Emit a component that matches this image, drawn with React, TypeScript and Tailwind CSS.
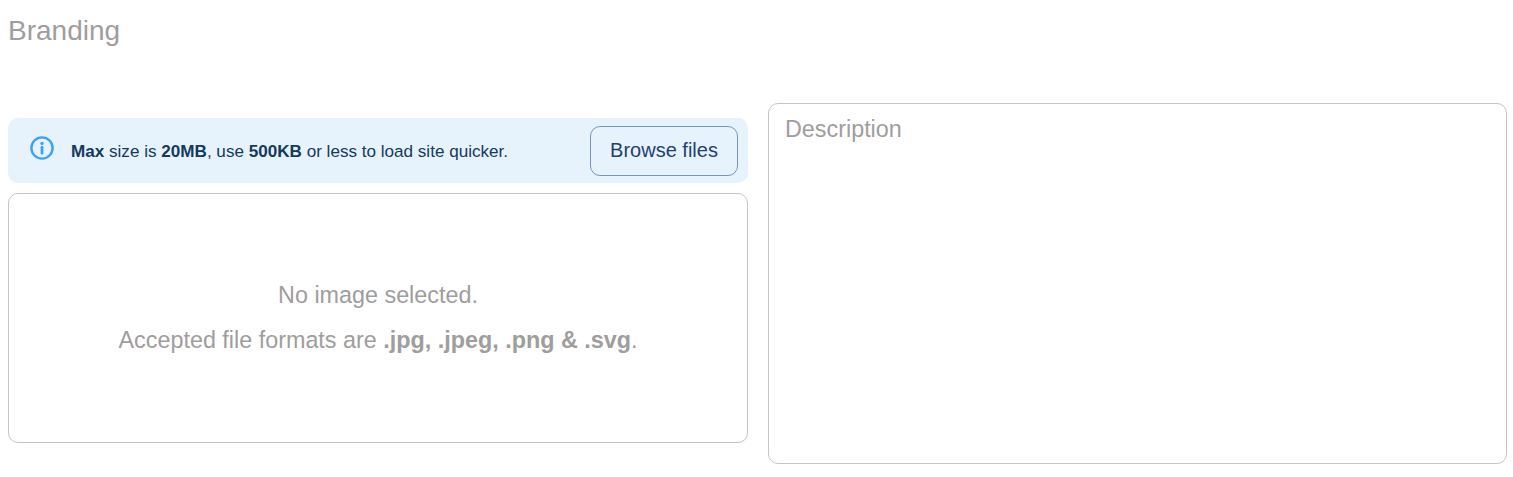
export default function App() {
  return (
    <div className="h-[477px] bg-white pl-2 pr-[6px] font-['Liberation_Sans',Arial,sans-serif]">
      <h2 className="h-[103px] pt-[15px] text-[28px] leading-[32px] text-[#a09d9d]">Branding</h2>
      <div className="flex gap-5">
        <div className="w-[740px] shrink-0 pt-[15px]">
          <div className="flex h-[65px] items-center rounded-[10px] bg-[#e6f3fd] pl-[21px] pr-[10px]">
            <svg width="26" height="26" viewBox="0 0 26 26" fill="none" className="mb-[5px] text-[#3ba1f5]">
              <circle cx="13" cy="13" r="10.6" stroke="currentColor" strokeWidth="2.4" />
              <circle cx="13" cy="8.4" r="1.7" fill="currentColor" />
              <path d="M13 12.2v6" stroke="currentColor" strokeWidth="2.8" strokeLinecap="round" />
            </svg>
            <p className="ml-4 flex-1 pt-[2px] text-[17.1px] text-[#143a5c]">
              <b>Max</b> size is <b>20MB</b>, use <b>500KB</b> or less to load site quicker.
            </p>
            <button className="h-[50px] w-[148px] rounded-[10px] border border-[#7a94bb] pb-[2px] text-[20px] text-[#24406f]">
              Browse files
            </button>
          </div>
          <div className="mt-[10px] flex h-[250px] flex-col items-center justify-center gap-[15px] rounded-[10px] border border-[#c4c4c4] pb-[2px] text-[23.35px] leading-[30px] text-[#a09d9d]">
            <p>No image selected.</p>
            <p>
              Accepted file formats are <b>.jpg, .jpeg, .png &amp; .svg</b>.
            </p>
          </div>
        </div>
        <textarea
          placeholder="Description"
          className="h-[361px] w-[739px] shrink-0 resize-none rounded-[10px] border border-[#c4c4c4] px-4 py-[10px] text-[23.35px] leading-[30px] outline-none placeholder:text-[#a09d9d]"
        />
      </div>
    </div>
  );
}
